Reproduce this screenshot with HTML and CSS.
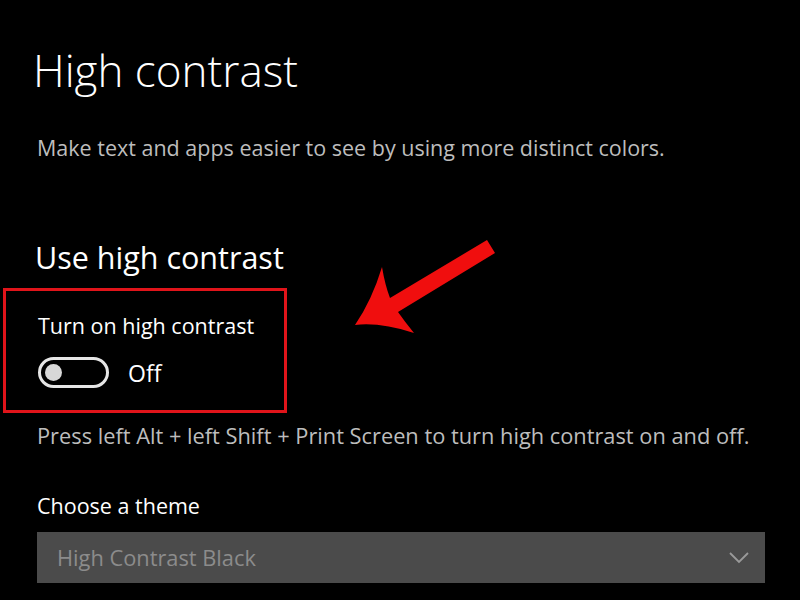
FILE: index.html
```html
<!DOCTYPE html>
<html>
<head>
<meta charset="utf-8">
<link rel="stylesheet" href="styles.css">
</head>
<body>
<div class="page">
  <h1 class="title">High contrast</h1>
  <p class="desc">Make text and apps easier to see by using more distinct colors.</p>
  <h2 class="subtitle">Use high contrast</h2>
  <div class="highlight">
    <div class="label">Turn on high contrast</div>
    <div class="toggle-row">
      <span class="toggle"><span class="knob"></span></span>
      <span class="state">Off</span>
    </div>
  </div>
  <p class="hint">Press left Alt + left Shift + Print Screen to turn high contrast on and off.</p>
  <div class="label theme-label">Choose a theme</div>
  <div class="select">
    <span class="select-text">High Contrast Black</span>
    <svg class="chevron" width="20" height="12" viewBox="0 0 20 12"><path d="M1 1 L10 10 L19 1" fill="none" stroke="#9a9a9a" stroke-width="1.8"/></svg>
  </div>
  <svg class="arrow" width="800" height="600" viewBox="0 0 800 600">
    <path d="M487 240 L495 253 L398 312 Q405 322 414 333 Q380 322 355 325 Q372 300 382 267 Q385 285 390 298 Z" fill="#f00e0e"/>
  </svg>
</div>
</body>
</html>
```
FILE: styles.css
```css
html, body {
  margin: 0;
  padding: 0;
  background: #000;
}
.page {
  position: relative;
  width: 800px;
  height: 600px;
  overflow: hidden;
  font-family: "Open Sans", "Noto Sans", sans-serif;
  color: #fff;
}
.title {
  margin: 0;
  padding: 43px 0 0 33px;
  font-size: 44px;
  font-weight: 300;
  line-height: 54px;
}
.desc {
  margin: 37px 0 0 37px;
  font-size: 21.5px;
  line-height: 28px;
  color: #bdbdbd;
}
.subtitle {
  margin: 76px 0 0 35px;
  font-size: 30.5px;
  font-weight: 400;
  line-height: 38px;
}
.highlight {
  margin: 12px 0 0 3px;
  width: 284px;
  height: 125px;
  border: 3px solid #e0141a;
  padding-left: 32px;
  box-sizing: border-box;
  padding-top: 21px;
}
.label {
  font-size: 21.5px;
  line-height: 28px;
  color: #fff;
}
.toggle-row {
  display: flex;
  align-items: center;
  gap: 19px;
  margin-top: 17px;
}
.toggle {
  width: 71px;
  height: 31px;
  box-sizing: border-box;
  border: 3px solid #e6e6e6;
  border-radius: 16px;
  display: flex;
  align-items: center;
  padding-left: 4px;
}
.knob {
  width: 17px;
  height: 17px;
  border-radius: 50%;
  background: #d8d8d8;
}
.state {
  font-size: 23px;
  line-height: 28px;
  color: #fff;
}
.hint {
  margin: 9px 0 0 37px;
  font-size: 21.8px;
  line-height: 28px;
  color: #bdbdbd;
}
.theme-label {
  margin: 42px 0 0 37px;
}
.select {
  margin: 12px 0 0 37px;
  width: 728px;
  height: 51px;
  background: #4b4b4b;
  display: flex;
  align-items: center;
  justify-content: space-between;
  padding: 0 16px 0 20px;
  box-sizing: border-box;
}
.select-text {
  font-size: 21.8px;
  color: #8c8c8c;
}
.arrow {
  position: absolute;
  left: 0;
  top: 0;
  pointer-events: none;
}
```
